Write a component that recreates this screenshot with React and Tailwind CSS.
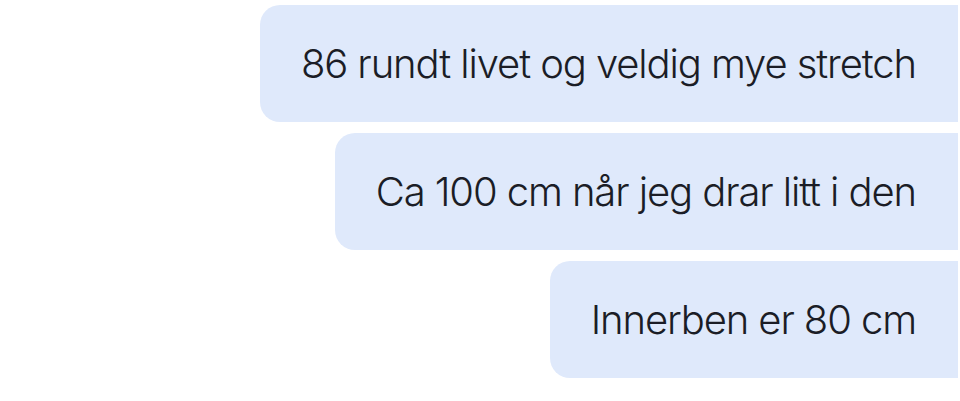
export default function App() {
  const msgs = [
    "86 rundt livet og veldig mye stretch",
    "Ca 100 cm når jeg drar litt i den",
    "Innerben er 80 cm",
  ];
  return (
    <div className="w-[960px] h-[401px] bg-white flex flex-col items-end pt-[5px] pr-[2px] gap-[11px]" style={{ fontFamily: "Inter, 'Noto Sans', sans-serif" }}>
      {msgs.map((m) => (
        <div key={m} className="h-[117px] flex items-center bg-[#dfe9fb] rounded-l-[20px] pl-[41px] pr-[42px] text-[#1b1d26] text-[40px] font-light tracking-[-1.1px] whitespace-nowrap">
          {m}
        </div>
      ))}
    </div>
  );
}
